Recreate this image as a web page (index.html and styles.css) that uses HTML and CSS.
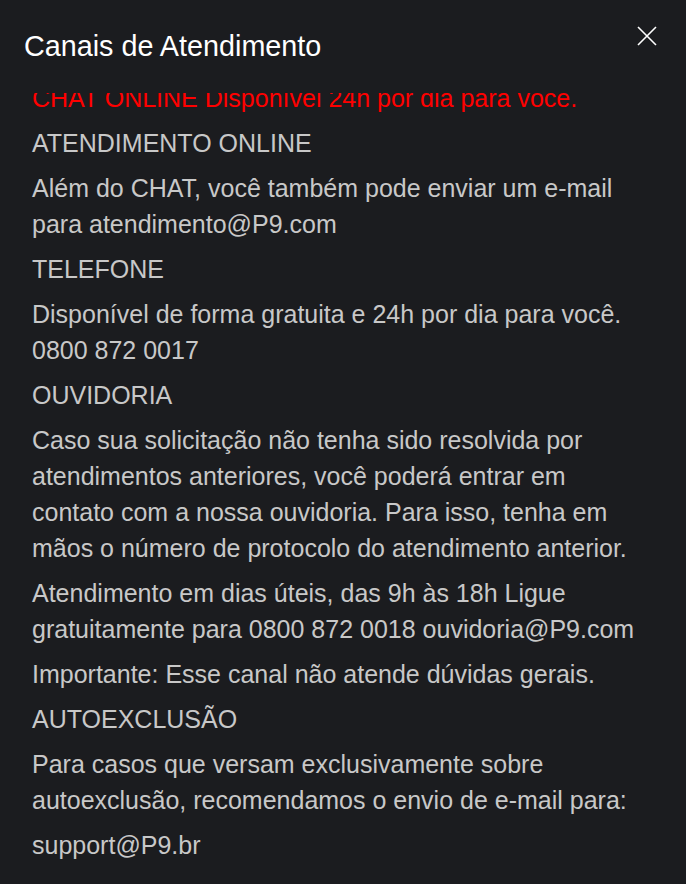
FILE: index.html
```html
<!DOCTYPE html>
<html lang="pt-BR">
    <head>
        <meta charset="UTF-8">
        <meta name="viewport" content="width=device-width, initial-scale=1.0">
        <title>Canais de Atendimento</title>
        <link rel="stylesheet" href="styles.css">
    </head>
    <body>
        <div class="modal">
            <div class="header">
                <h2 class="title">Canais de Atendimento</h2>
                <button class="close" aria-label="Fechar">
                    <svg width="20" height="20" viewBox="0 0 20 20">
                        <path d="M1 1 L19 19 M19 1 L1 19" stroke="#ffffff" stroke-width="1.6" fill="none"/>
                    </svg>
                </button>
            </div>
            <div class="body">
                <div class="inner">
                    <p class="red">CHAT ONLINE Disponível 24h por dia para você.</p>
                    <p>ATENDIMENTO ONLINE</p>
                    <p>Além do CHAT, você também pode enviar um e-mail para atendimento@P9.com</p>
                    <p>TELEFONE</p>
                    <p>Disponível de forma gratuita e 24h por dia para você.<br>0800 872 0017</p>
                    <p>OUVIDORIA</p>
                    <p>Caso sua solicitação não tenha sido resolvida por atendimentos anteriores, você poderá entrar em contato com a nossa ouvidoria. Para isso, tenha em mãos o número de protocolo do atendimento anterior.</p>
                    <p>Atendimento em dias úteis, das 9h às 18h Ligue gratuitamente para 0800 872 0018 ouvidoria@P9.com</p>
                    <p>Importante: Esse canal não atende dúvidas gerais.</p>
                    <p>AUTOEXCLUSÃO</p>
                    <p>Para casos que versam exclusivamente sobre autoexclusão, recomendamos o envio de e-mail para:</p>
                    <p>support@P9.br</p>
                </div>
            </div>
        </div>
    </body>
</html>
```

FILE: styles.css
```css
html, body {
    margin: 0;
    padding: 0;
    background-color: #1b1c1f;
}
.modal {
    width: 686px;
    height: 884px;
    background-color: #1b1c1f;
    font-family: "Liberation Sans", Arial, sans-serif;
    overflow: hidden;
}
.header {
    display: flex;
    justify-content: space-between;
    align-items: flex-start;
    height: 93px;
    padding: 26px 29px 0 24px;
    box-sizing: border-box;
}
.title {
    margin: 3px 0 0 0;
    font-size: 28.75px;
    line-height: 34px;
    font-weight: normal;
    color: #ffffff;
}
.close {
    width: 20px;
    height: 20px;
    padding: 0;
    border: none;
    background: none;
    cursor: pointer;
}
.close svg {
    display: block;
}
.body {
    height: 791px;
    overflow: hidden;
    padding: 0 33px 0 32px;
}
.inner {
    margin-top: -13px;
}
.inner p {
    margin: 0 0 9px 0;
    font-size: 25px;
    line-height: 36px;
    color: #c8c8c8;
}
.inner .red {
    color: #ff0000;
}
```
